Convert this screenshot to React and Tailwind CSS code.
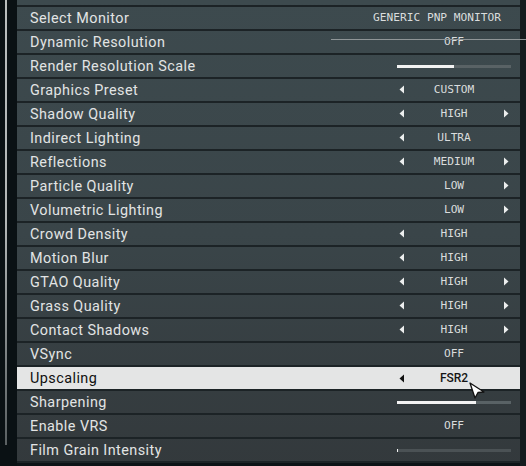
import React from "react";

const rows = [
    { label: "Select Monitor", kind: "monitor", value: "GENERIC PNP MONITOR" },
    { label: "Dynamic Resolution", kind: "value", value: "OFF" },
    { label: "Render Resolution Scale", kind: "slider", fill: 50 },
    { label: "Graphics Preset", kind: "value", value: "CUSTOM", left: true },
    { label: "Shadow Quality", kind: "value", value: "HIGH", left: true, right: true },
    { label: "Indirect Lighting", kind: "value", value: "ULTRA", left: true },
    { label: "Reflections", kind: "value", value: "MEDIUM", left: true, right: true },
    { label: "Particle Quality", kind: "value", value: "LOW", right: true },
    { label: "Volumetric Lighting", kind: "value", value: "LOW", right: true },
    { label: "Crowd Density", kind: "value", value: "HIGH", left: true },
    { label: "Motion Blur", kind: "value", value: "HIGH", left: true },
    { label: "GTAO Quality", kind: "value", value: "HIGH", left: true, right: true },
    { label: "Grass Quality", kind: "value", value: "HIGH", left: true, right: true },
    { label: "Contact Shadows", kind: "value", value: "HIGH", left: true, right: true },
    { label: "VSync", kind: "value", value: "OFF" },
    { label: "Upscaling", kind: "value", value: "FSR2", left: true, active: true },
    { label: "Sharpening", kind: "slider", fill: 69 },
    { label: "Enable VRS", kind: "value", value: "OFF" },
    { label: "Film Grain Intensity", kind: "slider", fill: 1, dim: true },
];

const Arrow = ({ dir, dark }) => (
    <svg width="6" height="9" viewBox="0 0 6 9" className="block">
        {dir === "left" ? (
            <polygon points="5,0.5 5,8.5 0.5,4.5" fill={dark ? "#111" : "#eceeee"} />
        ) : (
            <polygon points="1,0.5 1,8.5 5.5,4.5" fill={dark ? "#111" : "#eceeee"} />
        )}
    </svg>
);

const monoCls = "font-['DejaVu_Sans_Mono',monospace] text-[11.2px] text-[#dadddd]";

const Control = ({ row }) => {
    if (row.kind === "monitor") {
        return (
            <div className="w-[116px] flex justify-end pr-[11px]">
                <span className={`whitespace-nowrap ${monoCls}`}>{row.value}</span>
            </div>
        );
    }

    if (row.kind === "slider") {
        return (
            <div className="w-[116px] flex items-center pl-[1px]">
                <div className={`w-[114px] h-[3px] ${row.dim ? "bg-[#4b5255]" : "bg-[#596265]"}`}>
                    <div className="h-full bg-[#f2f2f2]" style={{ width: `${row.fill}%` }} />
                </div>
            </div>
        );
    }

    return (
        <div className="w-[116px] flex items-center">
            <div className="w-[12px] flex justify-center">{row.left && <Arrow dir="left" dark={row.active} />}</div>
            <div className="flex-1 flex justify-center">
                {row.active ? (
                    <span className="font-['Roboto',sans-serif] font-medium text-[12px] text-[#151515]">{row.value}</span>
                ) : (
                    <span className={monoCls}>{row.value}</span>
                )}
            </div>
            <div className="w-[12px] flex justify-center">{row.right && <Arrow dir="right" />}</div>
        </div>
    );
};

export default function App() {
    return (
        <div className="relative w-[526px] h-[466px] overflow-hidden bg-[#0c1316] flex">
            <div className="relative w-[17px] h-full bg-[#0a1114]">
                <div className="absolute left-[5px] top-0 w-[2px] h-[445px] bg-gradient-to-b from-[#b9bdbd] via-[#b2b6b6] to-[#5a6062]" />
            </div>

            <div className="w-[503px] flex flex-col bg-gradient-to-b from-[#3d4a4e] via-[#3a4549] to-[#33393c]">
                <div className="h-[7px] border-b-2 border-[#1c2326]" />
                {rows.map((row) => (
                    <div
                        key={row.label}
                        className={`h-[24px] shrink-0 flex items-center justify-between border-b-2 border-[#1c2326] pl-[13px] pr-[8px] ${
                            row.active ? "bg-[#e4e5e5]" : ""
                        }`}
                    >
                        <span
                            className={`mt-[2px] font-['Roboto',sans-serif] text-[14.4px] tracking-[0.45px] ${
                                row.active ? "text-[#101010]" : "text-[#e2e4e4]"
                            }`}
                        >
                            {row.label}
                        </span>
                        <Control row={row} />
                    </div>
                ))}
                <div className="flex-1 bg-[#0c1316]" />
            </div>

            <div className="w-[6px] h-full bg-[#141b1e]" />

            {/* stray line over the Dynamic Resolution row */}
            <div className="absolute left-[331px] right-0 top-[39px] h-px bg-[#8f9597]" />

            {/* mouse cursor */}
            <svg className="absolute left-[467px] top-[381px]" width="20" height="20" viewBox="0 0 20 20">
                <polygon points="3,2 17,11 11,11.5 8,17" fill="#ffffff" stroke="#111" strokeWidth="1.3" strokeLinejoin="round" />
            </svg>
        </div>
    );
}
